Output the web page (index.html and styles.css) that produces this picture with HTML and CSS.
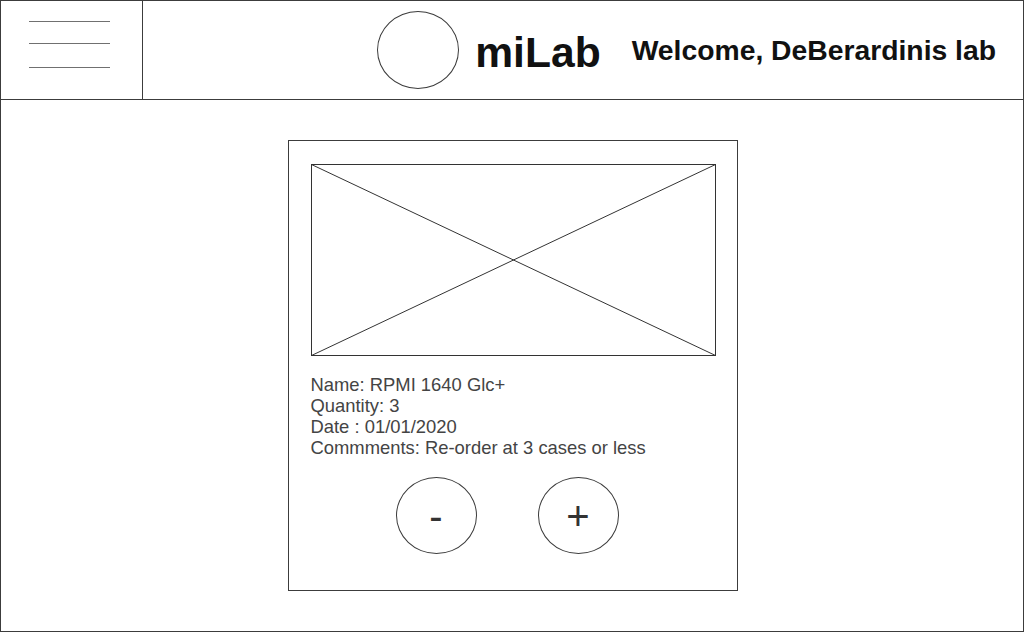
FILE: index.html
```html
<!DOCTYPE html>
<html>
<head>
<meta charset="utf-8">
<link rel="stylesheet" href="styles.css">
</head>
<body>
<div class="frame">
  <header class="topbar">
    <div class="menu">
      <span class="menu-line"></span>
      <span class="menu-line"></span>
      <span class="menu-line"></span>
    </div>
    <div class="brand">
      <div class="logo"></div>
      <div class="title">miLab</div>
      <div class="welcome">Welcome, DeBerardinis lab</div>
    </div>
  </header>
  <main class="content">
    <section class="card">
      <div class="placeholder">
        <svg width="405" height="192" viewBox="0 0 405 192">
          <rect x="0.5" y="0.5" width="404" height="191" fill="none" stroke="#333" stroke-width="1"/>
          <line x1="0.5" y1="0.5" x2="404.5" y2="191.5" stroke="#333" stroke-width="1"/>
          <line x1="404.5" y1="0.5" x2="0.5" y2="191.5" stroke="#333" stroke-width="1"/>
        </svg>
      </div>
      <div class="details">
        <div>Name: RPMI 1640 Glc+</div>
        <div>Quantity: 3</div>
        <div>Date : 01/01/2020</div>
        <div>Commments: Re-order at 3 cases or less</div>
      </div>
      <div class="actions">
        <div class="round-btn">-</div>
        <div class="round-btn">+</div>
      </div>
    </section>
  </main>
</div>
</body>
</html>
```

FILE: styles.css
```css
html, body {
  margin: 0;
  padding: 0;
  background: #fff;
}

.frame {
  width: 1024px;
  height: 632px;
  box-sizing: border-box;
  border: 1px solid #3c3c3c;
  display: flex;
  flex-direction: column;
  font-family: "Liberation Sans", Arial, sans-serif;
}

.topbar {
  height: 99px;
  box-sizing: border-box;
  border-bottom: 1px solid #3c3c3c;
  display: flex;
  flex-shrink: 0;
}

.menu {
  width: 142px;
  box-sizing: border-box;
  border-right: 1px solid #3c3c3c;
  display: flex;
  flex-direction: column;
  padding: 20px 0 0 28px;
}

.menu-line {
  display: block;
  width: 81px;
  height: 1px;
  background: #707070;
}

.menu-line + .menu-line {
  margin-top: 21px;
}

.menu-line:last-child {
  margin-top: 23px;
}

.brand {
  flex: 1;
  display: flex;
  align-items: center;
  justify-content: flex-end;
  padding-right: 27px;
}

.logo {
  width: 80px;
  height: 76px;
  border: 1px solid #3c3c3c;
  border-radius: 50%;
  margin-right: 16px;
}

.title {
  font-size: 42.6px;
  font-weight: bold;
  color: #111;
  margin-right: 31px;
  margin-top: 4px;
}

.welcome {
  font-size: 28.3px;
  font-weight: bold;
  color: #111;
  margin-top: 1px;
}

.content {
  flex: 1;
  display: flex;
  justify-content: center;
  align-items: flex-start;
  padding-top: 40px;
}

.card {
  width: 450px;
  height: 451px;
  box-sizing: border-box;
  border: 1px solid #3c3c3c;
  padding: 23px 0 0 22px;
  margin-left: 1px;
}

.placeholder svg {
  display: block;
}

.details {
  margin-top: 18px;
  font-size: 18.4px;
  line-height: 21px;
  color: #444;
}

.actions {
  display: flex;
  gap: 61px;
  margin-top: 19px;
  padding-left: 85px;
}

.round-btn {
  width: 79px;
  height: 75px;
  border: 1px solid #3c3c3c;
  border-radius: 50%;
  display: flex;
  align-items: center;
  justify-content: center;
  font-size: 40px;
  line-height: 40px;
  color: #333;
}
```
